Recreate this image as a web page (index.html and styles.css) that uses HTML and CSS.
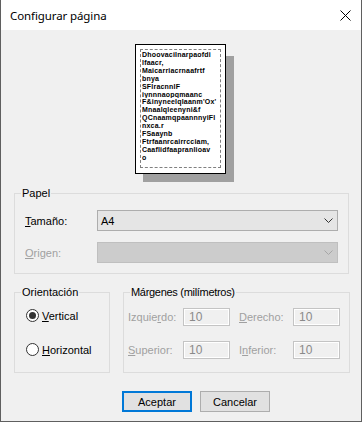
FILE: index.html
```html
<!DOCTYPE html>
<html lang="es">
<head>
<meta charset="utf-8">
<title>Configurar página</title>
<link rel="stylesheet" href="styles.css">
</head>
<body>
<div class="dialog">
	<div class="titlebar">
		<span class="title">Configurar página</span>
		<svg class="close" width="11" height="11" viewBox="0 0 11 11"><path d="M0.5 0.5L10.5 10.5M10.5 0.5L0.5 10.5" stroke="#000" stroke-width="1" fill="none"/></svg>
	</div>
	<div class="content">
		<div class="preview">
			<div class="shadow"></div>
			<div class="sheet">
				<div class="printarea">
					<p>Dhoovacilnarpaofdi</p>
					<p>lfaacr,</p>
					<p>Maicarriacrnaafrtf</p>
					<p>bnya</p>
					<p>SFlracnnlF</p>
					<p>iynnnaopqmaanc</p>
					<p>F&amp;inyneelqlaanm'Ox'</p>
					<p>Mnaalqleenyni&amp;f</p>
					<p>QCnaamqpaannnyiFl</p>
					<p>nxca.r</p>
					<p>FSaaynb</p>
					<p>Ftrfaanrcairrcciam,</p>
					<p>Caaflidfaapranlioav</p>
					<p>o</p>
				</div>
			</div>
		</div>

		<fieldset class="group paper">
			<legend>Papel</legend>
			<div class="paper-grid">
				<label><u>T</u>amaño:</label>
				<div class="select">A4<svg class="chev" width="9" height="5" viewBox="0 0 9 5"><path d="M0.5 0.5L4.5 4.5L8.5 0.5" stroke="#333" fill="none"/></svg></div>
				<label class="off"><u>O</u>rigen:</label>
				<div class="select disabled"><svg class="chev" width="9" height="5" viewBox="0 0 9 5"><path d="M0.5 0.5L4.5 4.5L8.5 0.5" stroke="#a6a6a6" fill="none"/></svg></div>
			</div>
		</fieldset>

		<div class="lower">
			<fieldset class="group orient">
				<legend>Orientación</legend>
				<div class="radios">
					<div class="radio"><span class="dot checked"></span><span><u>V</u>ertical</span></div>
					<div class="radio"><span class="dot"></span><span><u>H</u>orizontal</span></div>
				</div>
			</fieldset>
			<fieldset class="group margins">
				<legend class="tight">Márgenes (milímetros)</legend>
				<div class="margin-grid">
					<label class="off">Izquie<u>r</u>do:</label>
					<div class="num">10</div>
					<label class="off second"><u>D</u>erecho:</label>
					<div class="num">10</div>
					<label class="off"><u>S</u>uperior:</label>
					<div class="num">10</div>
					<label class="off second">I<u>n</u>ferior:</label>
					<div class="num">10</div>
				</div>
			</fieldset>
		</div>

		<div class="buttons">
			<button type="button" class="btn default">Aceptar</button>
			<button type="button" class="btn">Cancelar</button>
		</div>
	</div>
</div>
</body>
</html>
```

FILE: styles.css
```css
html,body{margin:0; padding:0; background:#f0f0f0;}
body{font-family:"Liberation Sans",Arial,sans-serif; font-size:11px; color:#000;}

.dialog{width:362px; height:422px; box-sizing:border-box; border:1px solid #5f5f5f; border-top:0; display:flex; flex-direction:column; background:#f0f0f0;}

.titlebar{height:30px; background:#fff; display:flex; align-items:center; justify-content:space-between; padding:0 10px 0 9px; flex-shrink:0;}
.title{font-family:"Noto Sans","Liberation Sans",sans-serif; font-size:11.5px; letter-spacing:-0.1px; color:#000;}
.close{display:block;}

.content{flex:1; display:flex; flex-direction:column;}

/* page preview */
.preview{position:relative; width:99px; height:138px; margin:14px 0 0 134px;}
.shadow{position:absolute; left:8px; top:12px; width:91px; height:126px; background:#a0a0a0;}
.sheet{position:relative; z-index:1; width:91px; height:130px; box-sizing:border-box; border:1px solid #000; background:#fff; padding:4px 4px 5px 4px;}
.printarea{height:100%; box-sizing:border-box; border:1px dashed #808080; padding:1px 0 0 1px; overflow:hidden;}
.printarea p{margin:0; font-size:7px; line-height:7.9px; font-weight:bold; letter-spacing:0.2px; white-space:nowrap; overflow:hidden;}

/* group boxes */
.group{margin:0; padding:0; border:1px solid #dcdcdc; min-width:0; box-sizing:border-box;}
.group legend{margin-left:6px; padding:0 1px; line-height:13px;}
.group legend.tight{letter-spacing:-0.3px;}

.paper{width:335px; margin:5px 0 0 13px;}
.paper-grid{display:grid; grid-template-columns:72px 1fr; grid-auto-rows:21px; row-gap:11px; align-items:center; padding:10px;}

.off{color:#a0a0a0;}

.select{height:21px; box-sizing:border-box; border:1px solid #adadad; background:#e5e5e5; display:flex; align-items:center; justify-content:space-between; padding:0 4px 0 3px;}
.select.disabled{background:#cccccc; border-color:#bfbfbf; justify-content:flex-end;}
.chev{display:block;}

.lower{display:flex; gap:13px; margin:12px 0 0 13px;}
.orient{width:96px; height:87px;}
.margins{width:227px; height:87px;}

.radios{display:flex; flex-direction:column; gap:21px; padding:10px 0 0 11px;}
.radio{display:flex; align-items:center; gap:3px; height:13px;}
.dot{width:13px; height:13px; box-sizing:border-box; border:1px solid #333; border-radius:50%; background:#fff; display:flex; align-items:center; justify-content:center;}
.dot.checked::after{content:""; width:7px; height:7px; border-radius:50%; background:#333;}

.margin-grid{display:grid; grid-template-columns:55px 47px 63px 47px; grid-auto-rows:18px; row-gap:15px; align-items:center; padding:9px 0 0 4px;}
.margin-grid .second{padding-left:9px;}
.num{height:18px; box-sizing:border-box; border:1px solid #c4c4c4; box-shadow:inset 0 0 0 1px #fff; color:#8a8a8a; padding:2px 0 0 5px; font-size:12px; line-height:13px;}

.buttons{display:flex; gap:8px; margin:18px 0 0 121px;}
.btn{width:70px; height:21px; box-sizing:border-box; border:1px solid #adadad; background:#e1e1e1; font-family:"Liberation Sans",Arial,sans-serif; font-size:11px; color:#000; padding:0; margin:0;}
.btn.default{border:2px solid #0078d7;}
```
